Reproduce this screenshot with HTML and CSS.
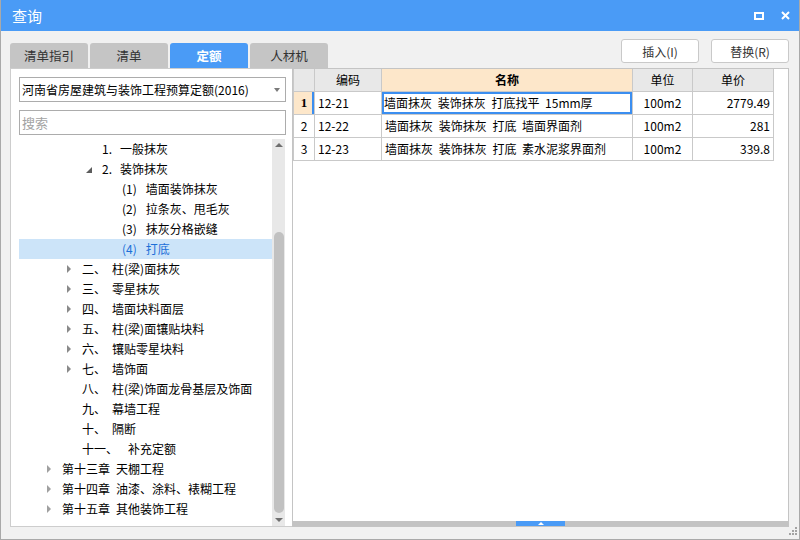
FILE: index.html
```html
<!DOCTYPE html>
<html lang="zh-CN">
<head>
<meta charset="utf-8">
<title>查询</title>
<link rel="stylesheet" href="styles.css">
</head>
<body>
<div class="window">
  <div class="titlebar">
    <span class="title">查询</span>
    <div class="win-ctrls">
      <svg class="ico-max" width="10" height="8" viewBox="0 0 10 8"><rect x="1" y="1" width="8" height="6" fill="none" stroke="#fff" stroke-width="2"/></svg>
      <svg class="ico-close" width="9" height="9" viewBox="0 0 9 9"><path d="M1 1 L8 8 M8 1 L1 8" stroke="#fff" stroke-width="2" fill="none"/></svg>
    </div>
  </div>
  <div class="body">
    <div class="toolbar">
      <div class="tabs">
        <div class="tab">清单指引</div>
        <div class="tab">清单</div>
        <div class="tab active">定额</div>
        <div class="tab">人材机</div>
      </div>
      <div class="actions">
        <button class="btn">插入(I)</button>
        <button class="btn">替换(R)</button>
      </div>
    </div>
    <div class="content">
      <div class="left">
        <div class="combo"><span>河南省房屋建筑与装饰工程预算定额(2016)</span><i class="caret"></i></div>
        <div class="search"><span class="ph">搜索</span></div>
        <div class="tree">
          <div class="rows">
            <div class="node lv2"><span class="tw"></span><span class="num n">1.</span>一般抹灰</div>
            <div class="node lv2"><span class="tw e"></span><span class="num n">2.</span>装饰抹灰</div>
            <div class="node lv3"><span class="num p">(1)</span>墙面装饰抹灰</div>
            <div class="node lv3"><span class="num p">(2)</span>拉条灰、甩毛灰</div>
            <div class="node lv3"><span class="num p">(3)</span>抹灰分格嵌缝</div>
            <div class="node lv3 sel"><span class="num p">(4)</span>打底</div>
            <div class="node lv1"><span class="tw c"></span><span class="num">二、</span>柱(梁)面抹灰</div>
            <div class="node lv1"><span class="tw c"></span><span class="num">三、</span>零星抹灰</div>
            <div class="node lv1"><span class="tw c"></span><span class="num">四、</span>墙面块料面层</div>
            <div class="node lv1"><span class="tw c"></span><span class="num">五、</span>柱(梁)面镶贴块料</div>
            <div class="node lv1"><span class="tw c"></span><span class="num">六、</span>镶贴零星块料</div>
            <div class="node lv1"><span class="tw c"></span><span class="num">七、</span>墙饰面</div>
            <div class="node lv1"><span class="tw"></span><span class="num">八、</span>柱(梁)饰面龙骨基层及饰面</div>
            <div class="node lv1"><span class="tw"></span><span class="num">九、</span>幕墙工程</div>
            <div class="node lv1"><span class="tw"></span><span class="num">十、</span>隔断</div>
            <div class="node lv1"><span class="tw"></span><span class="num w">十一、</span>补充定额</div>
            <div class="node lv0"><span class="tw c light"></span><span class="num">第十三章</span>天棚工程</div>
            <div class="node lv0"><span class="tw c light"></span><span class="num">第十四章</span>油漆、涂料、裱糊工程</div>
            <div class="node lv0"><span class="tw c light"></span><span class="num">第十五章</span>其他装饰工程</div>
          </div>
          <div class="vscroll">
            <i class="arr-up"></i>
            <div class="thumb"></div>
            <div class="fill"></div>
            <i class="arr-down"></i>
          </div>
        </div>
      </div>
      <div class="right">
        <div class="grid-area">
          <table class="grid">
            <colgroup>
              <col class="c-no"><col class="c-code"><col class="c-name"><col class="c-unit"><col class="c-price">
            </colgroup>
            <thead>
              <tr>
                <th></th>
                <th>编码</th>
                <th class="hl">名称</th>
                <th>单位</th>
                <th>单价</th>
              </tr>
            </thead>
            <tbody>
              <tr>
                <td class="no cur">1</td>
                <td>12-21</td>
                <td class="focus">墙面抹灰 装饰抹灰 打底找平 15mm厚</td>
                <td class="ctr">100m2</td>
                <td class="rt">2779.49</td>
              </tr>
              <tr>
                <td class="no">2</td>
                <td>12-22</td>
                <td>墙面抹灰 装饰抹灰 打底 墙面界面剂</td>
                <td class="ctr">100m2</td>
                <td class="rt">281</td>
              </tr>
              <tr>
                <td class="no">3</td>
                <td>12-23</td>
                <td>墙面抹灰 装饰抹灰 打底 素水泥浆界面剂</td>
                <td class="ctr">100m2</td>
                <td class="rt">339.8</td>
              </tr>
            </tbody>
          </table>
        </div>
        <div class="hbar"><div class="hthumb"><i></i></div></div>
      </div>
    </div>
  </div>
  <svg class="grip" width="8" height="8" viewBox="0 0 8 8">
    <rect x="6" y="0" width="2" height="2" fill="#a3a3a3"/>
    <rect x="3" y="3" width="2" height="2" fill="#a3a3a3"/>
    <rect x="6" y="3" width="2" height="2" fill="#a3a3a3"/>
    <rect x="0" y="6" width="2" height="2" fill="#a3a3a3"/>
    <rect x="3" y="6" width="2" height="2" fill="#a3a3a3"/>
    <rect x="6" y="6" width="2" height="2" fill="#a3a3a3"/>
  </svg>
</div>
</body>
</html>
```

FILE: styles.css
```css
html, body {
  margin: 0;
  padding: 0;
}
body {
  font-family: "Noto Sans CJK SC", "Noto Sans", sans-serif;
  font-size: 12px;
  color: #000;
  background: #f0f0f0;
}
.window {
  position: relative;
  width: 800px;
  height: 540px;
  box-sizing: border-box;
  border: 1px solid #a9a9a9;
  border-top: none;
  background: #f1f1f1;
  display: flex;
  flex-direction: column;
}
.titlebar {
  height: 31px;
  flex-shrink: 0;
  background: #4a9bf6;
  color: #fff;
  display: flex;
  align-items: center;
  justify-content: space-between;
  padding: 0 9px 0 11px;
}
.title {
  font-size: 15px;
  line-height: 1;
}
.win-ctrls {
  display: flex;
  align-items: center;
  gap: 17px;
}
.win-ctrls svg {
  display: block;
}
.body {
  flex: 1;
  min-height: 0;
  display: flex;
  flex-direction: column;
  padding: 8px 10px 12px 9px;
}
.toolbar {
  height: 29px;
  flex-shrink: 0;
  display: flex;
  justify-content: space-between;
  align-items: flex-start;
}
.tabs {
  display: flex;
  gap: 2px;
  margin-top: 4px;
}
.tab {
  width: 78px;
  height: 25px;
  background: #c5c5c5;
  border-radius: 3px 3px 0 0;
  display: flex;
  align-items: center;
  justify-content: center;
  color: #333;
  font-size: 12.5px;
}
.tab.active {
  background: #4a9bf6;
  color: #fff;
  font-weight: bold;
}
.actions {
  display: flex;
  gap: 12px;
}
.btn {
  width: 78px;
  height: 24px;
  padding: 0;
  border: 1px solid #c9c9c9;
  border-radius: 3px;
  background: #fff;
  font-family: inherit;
  font-size: 12px;
  color: #333;
}
.content {
  flex: 1;
  min-height: 0;
  display: flex;
}
.left {
  width: 282px;
  flex-shrink: 0;
  box-sizing: border-box;
  background: #fff;
  border: 1px solid #cdcdcd;
  border-right: none;
  padding: 8px 0 0 8px;
  display: flex;
  flex-direction: column;
}
.combo, .search {
  width: 267px;
  height: 25px;
  flex-shrink: 0;
  box-sizing: border-box;
  border: 1px solid #acacac;
  background: #fff;
  display: flex;
  align-items: center;
  padding: 0 5px 0 2px;
}
.combo {
  justify-content: space-between;
}
.caret {
  width: 0;
  height: 0;
  border-top: 4px solid #7a7a7a;
  border-left: 3px solid transparent;
  border-right: 3px solid transparent;
}
.search {
  margin-top: 8px;
  color: #a3a3a3;
  font-size: 13px;
}
.tree {
  margin-top: 4px;
  width: 266px;
  flex: 1;
  min-height: 0;
  display: flex;
}
.rows {
  flex: 1;
  overflow: hidden;
}
.node {
  height: 20px;
  box-sizing: border-box;
  padding-bottom: 2px;
  display: flex;
  align-items: center;
  white-space: nowrap;
  word-spacing: 3px;
}
.lv0 { padding-left: 28px; }
.lv1 { padding-left: 48px; }
.lv2 { padding-left: 68px; }
.lv3 { padding-left: 103px; }
.tw {
  width: 15px;
  flex-shrink: 0;
  display: flex;
  align-items: center;
  margin-top: 2px;
}
.tw.c::before {
  content: "";
  width: 0;
  height: 0;
  border-left: 4px solid #8a8a8a;
  border-top: 4px solid transparent;
  border-bottom: 4px solid transparent;
}
.tw.c.light::before {
  border-left-color: #a0a0a0;
}
.tw.e::before {
  content: "";
  width: 0;
  height: 0;
  margin-left: -1px;
  margin-top: 1px;
  border-bottom: 6px solid #5c5c5c;
  border-left: 6px solid transparent;
}
.num {
  margin-right: 6px;
}
.num.n {
  margin-right: 8px;
}
.num.p {
  margin-right: 9px;
}
.num.w {
  margin-right: 10px;
}
.node.sel {
  background: #cce4f9;
  color: #1d6fd8;
}
.vscroll {
  width: 13px;
  flex-shrink: 0;
  background: #e8e8e8;
  display: flex;
  flex-direction: column;
  align-items: center;
  padding: 4px 0;
  box-sizing: border-box;
}
.arr-up {
  width: 0;
  height: 0;
  border-bottom: 4px solid #6f6f6f;
  border-left: 4px solid transparent;
  border-right: 4px solid transparent;
}
.arr-down {
  width: 0;
  height: 0;
  border-top: 4px solid #6f6f6f;
  border-left: 4px solid transparent;
  border-right: 4px solid transparent;
}
.thumb {
  width: 10px;
  height: 281px;
  margin-top: 85px;
  border-radius: 5px;
  background: #c1c1c1;
  flex-shrink: 0;
}
.fill {
  flex: 1;
}
.right {
  flex: 1;
  min-width: 0;
  box-sizing: border-box;
  border: 1px solid #c4c4c4;
  background: #fff;
  display: flex;
  flex-direction: column;
}
.grid-area {
  flex: 1;
  min-height: 0;
}
.grid {
  border-collapse: collapse;
  table-layout: fixed;
  width: 481px;
}
.c-no { width: 21px; }
.c-code { width: 67px; }
.c-name { width: 251px; }
.c-unit { width: 60px; }
.c-price { width: 81px; }
.grid th, .grid td {
  border: 1px solid #c9c9c9;
  height: 21px;
  padding: 0 3px 1px;
  font-size: 12px;
  white-space: nowrap;
  overflow: hidden;
  text-align: left;
  word-spacing: 3px;
}
.grid th {
  border-top: none;
  background: #e8e8e8;
  font-weight: normal;
  text-align: center;
}
.grid th.hl {
  background: #fde7ca;
  font-weight: bold;
}
.grid td.no {
  text-align: center;
  padding: 0 0 1px;
  background: #fff;
}
.grid td.no.cur {
  background: #fde7ca;
  font-family: "Liberation Serif", serif;
  font-weight: bold;
  font-size: 13px;
  box-shadow: inset -2px 0 0 #3b8ef0;
}
.grid td.focus {
  box-shadow: inset 0 0 0 2px #3b8ef0;
  padding-left: 2px;
}
.grid td.ctr {
  text-align: center;
}
.grid td.rt {
  text-align: right;
}
.hbar {
  height: 5px;
  flex-shrink: 0;
  background: #c3c3c3;
  display: flex;
  justify-content: center;
}
.hthumb {
  width: 49px;
  height: 5px;
  background: #4a9bf6;
  display: flex;
  justify-content: center;
  align-items: center;
}
.hthumb i {
  width: 0;
  height: 0;
  border-bottom: 3px solid #fff;
  border-left: 3px solid transparent;
  border-right: 3px solid transparent;
}
.grip {
  position: absolute;
  right: 2px;
  bottom: 4px;
  display: block;
}
```
